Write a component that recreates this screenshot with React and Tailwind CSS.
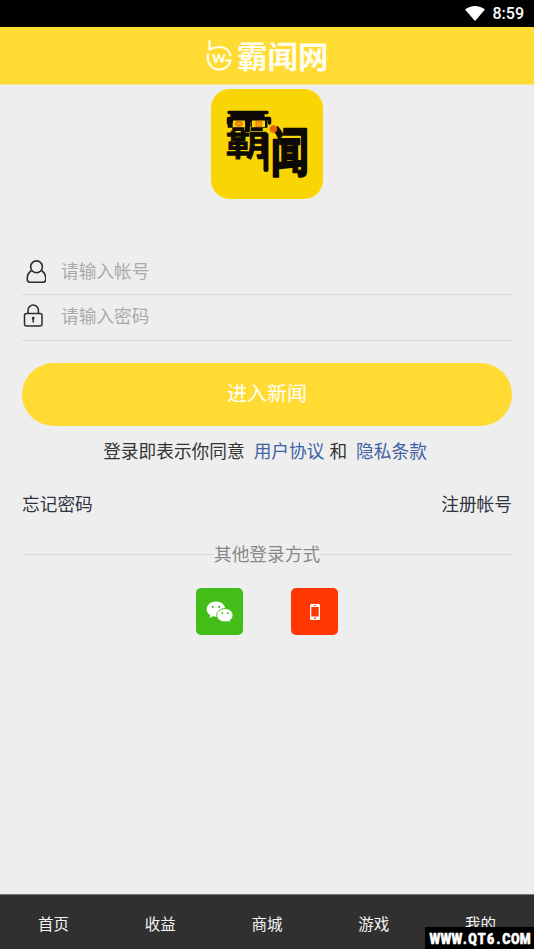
const CJK = "font-['Noto_Sans_CJK_SC',sans-serif]";

function StatusBar() {
  return (
    <div className="flex h-[27px] shrink-0 items-center justify-end bg-black pt-px pr-[10px] text-white">
      <svg className="mr-[8px] mb-px h-[15px] w-[20px]" viewBox="0 0 20 15" fill="#fff">
        <path d="M0 3.600C5.800-1.100 14.200-1.100 20 3.600L10 15z" />
      </svg>
      <span className="font-['Roboto',sans-serif] text-base leading-none font-medium">8:59</span>
    </div>
  );
}

function Header() {
  return (
    <header className="flex h-[58px] shrink-0 justify-center border-b border-[#f8e69a] bg-[#ffdb33]">
      <svg className="h-[57px] w-[128px]" viewBox="203 27 128 57">
        <g fill="none" stroke="#fffdf0" strokeWidth="2.200" strokeLinecap="round">
          <path d="M209.500 41v8.500M209.500 49.500C213 47.500 216 47 219.500 47c6 0 10 3.500 11 8.500" />
          <path d="M208 54c-1.500 9 3.500 15.500 11 15.500 6 0 10-3.500 11.500-9h-4.500" />
        </g>
        <text x="212" y="62.500" fontSize="16" fontWeight="500" fill="#fffdf0" fontFamily="Roboto, sans-serif" textLength="14" lengthAdjust="spacingAndGlyphs">w</text>
        <text x="237" y="68" fontSize="30.500" fontWeight="700" fill="#fffdf0" fontFamily="'Noto Sans CJK SC', sans-serif">霸闻网</text>
      </svg>
    </header>
  );
}

function AppLogo() {
  return (
    <svg className="mx-auto mt-[4px] h-[110px] w-[112px] shrink-0" viewBox="0 0 112 110">
      <rect width="112" height="110" rx="19" fill="#f8d503" />
      <g fill="#0d0a05" stroke="#0d0a05" strokeLinejoin="round" fontFamily="'Noto Sans CJK SC', sans-serif" fontSize="40">
        <text strokeWidth="1" fontWeight="500" transform="translate(14 65) scale(1.120 1.260)">霸</text>
        <text strokeWidth="1.800" fontWeight="700" transform="translate(60 83) scale(.94 1.300)">闻</text>
      </g>
      <path d="M18 23.500h38M17.500 34v-4.500h41V34" fill="none" stroke="#0d0a05" strokeWidth="3.500" strokeLinecap="round" strokeLinejoin="round" />
      <path d="M55 46v34.500" stroke="#0d0a05" strokeWidth="5" strokeLinecap="round" />
      <rect x="22" y="31.500" width="12" height="6.500" fill="#f8d503" />
      <rect x="41" y="31.500" width="13" height="6.500" fill="#f8d503" />
      <path d="M37.500 23v15" stroke="#0d0a05" strokeWidth="4" />
      <ellipse cx="28" cy="34.700" rx="4" ry="3" fill="#ef7d0c" />
      <rect x="44.500" y="32" width="6.500" height="6" fill="#ef7d0c" />
      <path d="M26.500 34.700h3M46 34h3.500M46 36h3.500" stroke="#f8d503" />
      <circle cx="62.500" cy="40" r="3.700" fill="#e8640f" />
    </svg>
  );
}

function UserIcon() {
  return (
    <svg className="mt-[2px] h-[24px] w-[24px]" viewBox="0 0 24 24" fill="none" stroke="#2d2d2d" strokeWidth="1.600" strokeLinejoin="round">
      <circle cx="14.500" cy="6.800" r="5.900" />
      <path d="M9.500 10.500C6.600 12.300 5.200 15.500 5.200 19.300c0 1.900 1 2.900 2.900 2.900h12.800c1.900 0 2.900-1 2.900-2.900 0-3.800-1.400-7-4.300-8.800" />
    </svg>
  );
}

function LockIcon() {
  return (
    <svg className="h-[24px] w-[24px]" viewBox="0 0 24 24" fill="none" stroke="#2d2d2d" strokeWidth="1.500">
      <rect x="2.500" y="9.500" width="17.500" height="12.500" rx="2" />
      <path d="M6 9.500V6.300a5.200 5.200 0 0 1 10.400 0V9.500" />
      <path d="M11.200 14.500v4" />
      <circle cx="11.200" cy="14.200" r=".7" />
    </svg>
  );
}

function Field({ icon, label, className }) {
  return (
    <div className={`flex items-center border-b border-[#dadada] ${className}`}>
      {icon}
      <span className="ml-[15px] text-[17.700px] leading-none text-[#aaa]">{label}</span>
    </div>
  );
}

function WechatIcon() {
  return (
    <svg className="h-[22px] w-[28px]" viewBox="0 0 28 22">
      <path d="M10 .5C4.700.5.700 4 .700 8.200c0 2.500 1.300 4.600 3.500 6L3.500 17l3.300-1.700c1 .3 2 .4 3.200.4 5.300 0 9.300-3.300 9.300-7.500S15.300.5 10 .5z" fill="#fff" />
      <path d="M19 7.500c-4.700 0-8.300 3-8.300 6.700s3.600 6.700 8.300 6.700c1 0 2-.1 2.800-.4L24.500 22l-.7-2.500c2-1.300 3.200-3 3.200-5.300 0-3.700-3.500-6.700-8-6.700z" fill="#fff" stroke="#43bd18" strokeWidth=".9" />
      <g fill="#43bd18">
        <circle cx="6.700" cy="5.800" r="1.100" />
        <circle cx="13.200" cy="5.800" r="1.100" />
        <circle cx="16.300" cy="12.300" r=".95" />
        <circle cx="21.700" cy="12.300" r=".95" />
      </g>
    </svg>
  );
}

function PhoneIcon() {
  return (
    <svg className="h-[16px] w-[10px]" viewBox="0 0 10 16">
      <rect width="10" height="16" rx="1.300" fill="#fff" />
      <path d="M1.300 3h7.400v9.500H1.300z" fill="#ff3703" />
      <path d="M3.500 1.500h3" stroke="#ff3703" strokeWidth=".7" />
      <circle cx="5" cy="14.200" r=".9" fill="#ff3703" />
    </svg>
  );
}

export default function App() {
  return (
    <div className={`relative flex h-[949px] w-[534px] flex-col overflow-hidden bg-[#eee] ${CJK}`}>
      <StatusBar />
      <Header />
      <AppLogo />
      <main className="flex flex-1 flex-col px-[22px] pt-[50px]">
        <Field icon={<UserIcon />} label="请输入帐号" className="h-[46px] pb-px" />
        <Field icon={<LockIcon />} label="请输入密码" className="h-[46px] pb-[3px]" />
        <button className="mt-[22px] h-[63px] w-full rounded-full bg-[#ffdb33] pb-[3px] text-[20px] leading-none text-white">
          进入新闻
        </button>
        <p className="mt-[16px] flex h-[18px] items-center justify-center pr-[4px] text-[17.700px] leading-none whitespace-nowrap text-[#333]">
          <span>登录即表示你同意</span>
          <a className="ml-[9px] text-[#3e62a3]">用户协议</a>
          <span className="ml-[5px]">和</span>
          <a className="ml-[9px] text-[#3e62a3]">隐私条款</a>
        </p>
        <div className="mt-[35px] flex h-[18px] items-center justify-between text-[17.700px] leading-none text-[#30343f]">
          <a>忘记密码</a>
          <a>注册帐号</a>
        </div>
        <div className="mt-[32px] flex h-[18px] items-center text-[17.700px] leading-none text-[#888]">
          <span className="h-px flex-1 bg-[#dadada]" />
          <span>其他登录方式</span>
          <span className="h-px flex-1 bg-[#dadada]" />
        </div>
        <div className="mt-[25px] flex justify-center gap-[48px]">
          <div className="flex size-[47px] items-center justify-center rounded-[5px] bg-[#43bd18]">
            <WechatIcon />
          </div>
          <div className="flex size-[47px] items-center justify-center rounded-[5px] bg-[#ff3703]">
            <PhoneIcon />
          </div>
        </div>
      </main>
      <nav className="grid h-[55px] shrink-0 grid-cols-5 items-center border-t border-[#777] bg-[#303030] pt-[3px] text-center text-[15.500px] leading-none text-[#f4f4f4]">
        <span>首页</span>
        <span>收益</span>
        <span>商城</span>
        <span>游戏</span>
        <span>我的</span>
      </nav>
      <div className="absolute right-0 bottom-0 h-[22px] w-[109px] bg-black">
        <svg className="h-[22px] w-[109px]" viewBox="0 0 109 22">
          <text
            transform="translate(0 17.200) scale(.8 1)"
            x="5.600 19.400 33.200 47.500 54 66 77.500 89.500 96.500 107.500 118.500"
            y="0"
            fill="#fff"
            stroke="#fff"
            strokeWidth=".6"
            fontFamily="Roboto, sans-serif"
            fontWeight="900"
            fontSize="15.500"
          >
            WWW.QT6.COM
          </text>
        </svg>
      </div>
    </div>
  );
}
